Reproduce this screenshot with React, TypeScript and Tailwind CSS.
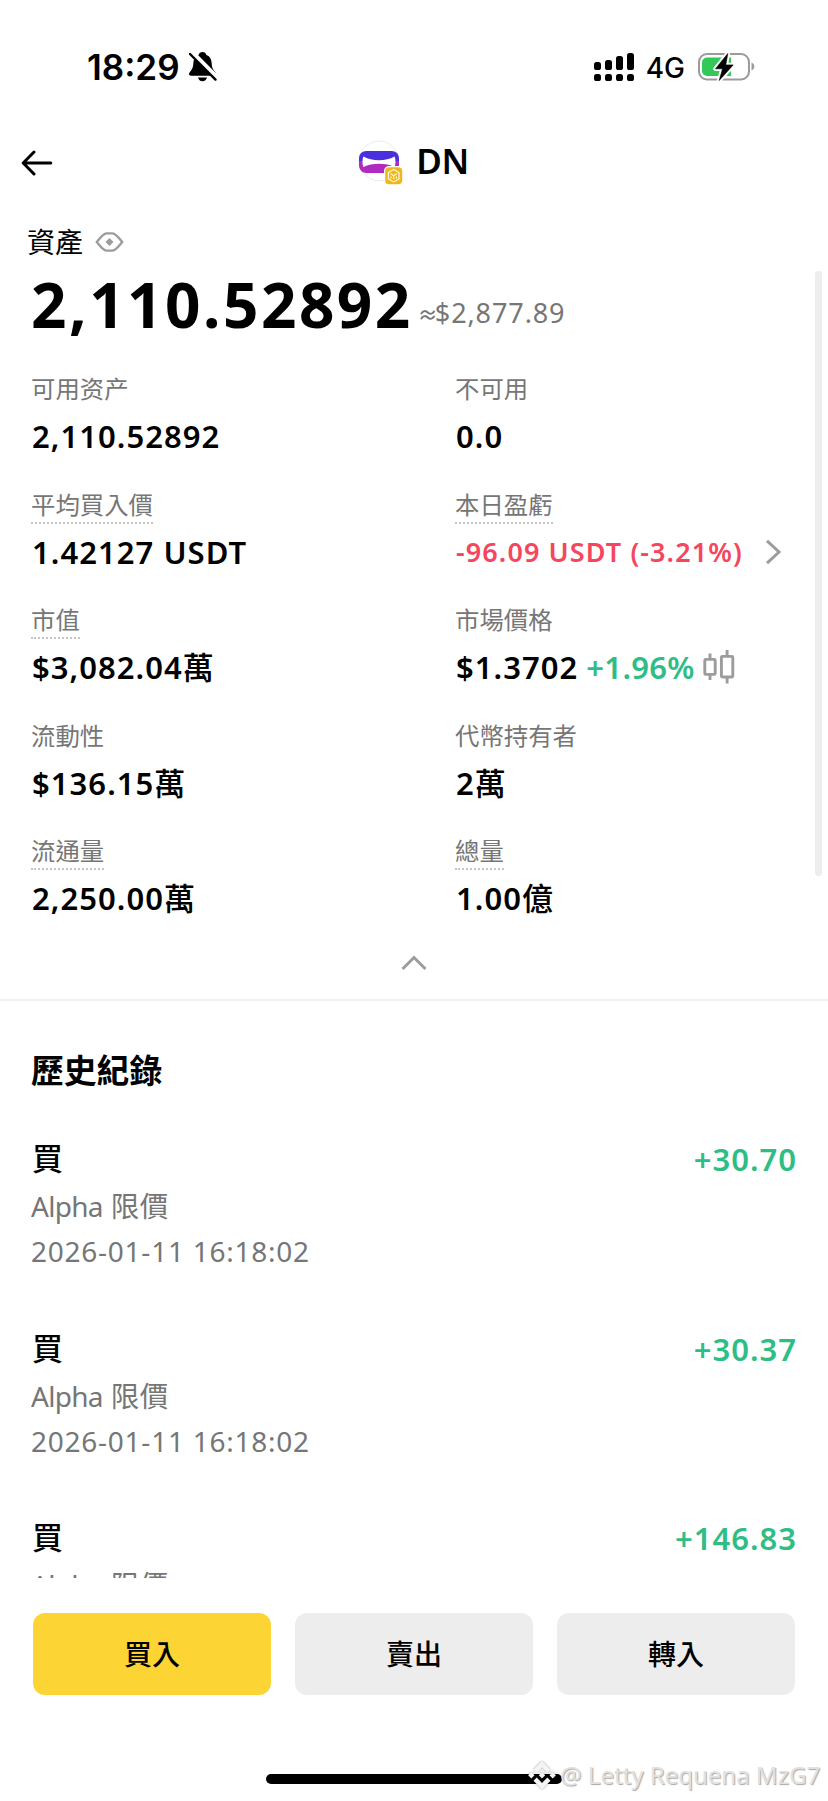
import type { ReactNode } from 'react'

type Stat = { label: string; hint?: boolean; value: ReactNode }

const Unit = ({ children }: { children: string }) => <span className="font-medium tracking-normal">{children}</span>

const stats: Stat[] = [
  { label: '可用资产',   value: '2,110.52892' },
  { label: '不可用',     value: '0.0' },
  { label: '平均買入價', hint: true, value: '1.42127 USDT' },
  { label: '本日盈虧',   hint: true, value: <DailyPnl /> },
  { label: '市值',       hint: true, value: <>$3,082.04<Unit>萬</Unit></> },
  { label: '市場價格',   value: <MarketPrice /> },
  { label: '流動性',     value: <>$136.15<Unit>萬</Unit></> },
  { label: '代幣持有者', value: <>2<Unit>萬</Unit></> },
  { label: '流通量',     hint: true, value: <>2,250.00<Unit>萬</Unit></> },
  { label: '總量',       hint: true, value: <>1.00<Unit>億</Unit></> },
]

const history = [
  { id: 1, amount: '+30.70',  date: '2026-01-11 16:18:02' },
  { id: 2, amount: '+30.37',  date: '2026-01-11 16:18:02' },
  { id: 3, amount: '+146.83', date: '2026-01-11 16:18:02' },
]

const actions = [
  { label: '買入', color: 'bg-[#fcd535]' },
  { label: '賣出', color: 'bg-[#ededed]' },
  { label: '轉入', color: 'bg-[#ededed]' },
]

function DailyPnl() {
  return (
    <span className="flex items-center text-[#f6465d]">
      <span className="text-[27px] tracking-[1.100px]">-96.09 USDT (-3.21%)</span>
      <svg className="ml-[22px]" width="17" height="26" viewBox="0 0 17 26" fill="none" stroke="#9c9c9c" strokeWidth="3">
        <path d="M2 1.8 14 13 2 24.2" />
      </svg>
    </span>
  )
}

function MarketPrice() {
  return (
    <span className="flex items-center">
      $1.3702
      <span className="ml-[8px] tracking-[0.300px] text-[#2ebd85]">+1.96%</span>
      <svg className="ml-[8px]" width="32" height="34" viewBox="0 0 32 34" fill="none" stroke="#9c9c9c" strokeWidth="2.9">
        <rect x="1.8" y="9.4" width="10.4" height="15" rx="1" />
        <path d="M7 3.5v6M7 24.5v5.5" />
        <rect x="18.4" y="6.4" width="11.4" height="20.6" rx="1" />
        <path d="M24.1 0v6M24.1 27v6.5" />
      </svg>
    </span>
  )
}

function StatusBar() {
  return (
    <div className="flex h-[134px] items-center justify-between pl-[87px] pr-[73px] font-[Inter,sans-serif]">
      <div className="flex items-center">
        <span className="text-[35px] font-semibold">18:29</span>
        <svg className="ml-[9px]" width="28" height="30" viewBox="0 0 28 30">
          <path d="M13.5 0c-2 0-3.4 1.2-3.9 2.9C6.4 4 4.600 6.700 4.400 10.500c-.2 4-.8 6.200-2.700 8.500C.6 20.400 0 21.300 0 22.100c0 1 .8 1.700 2 1.700h23c1.200 0 2-.7 2-1.700 0-.8-.6-1.700-1.700-3.100-1.900-2.300-2.500-4.500-2.700-8.500-.2-3.800-2-6.500-5.200-7.600C16.900 1.200 15.500 0 13.500 0ZM9 25.600c.5 2.200 2.300 3.700 4.500 3.700s4-1.500 4.500-3.700Z" />
          <path d="M2.500 0 28 25.800" stroke="#fff" strokeWidth="5" />
          <path d="M1 2 26.500 27.600" stroke="#000" strokeWidth="2.400" strokeLinecap="round" />
        </svg>
      </div>
      <div className="flex items-center">
        <svg width="40" height="28" viewBox="0 0 40 28">
          <rect x="0" y="9" width="7" height="8" rx="2.600" />
          <rect x="11" y="7" width="7" height="10" rx="2.600" />
          <rect x="22" y="3" width="7" height="14" rx="2.600" />
          <rect x="33" y="0" width="7" height="17" rx="2.600" />
          <rect x="0" y="21" width="7" height="7" rx="2.600" />
          <rect x="11" y="21" width="7" height="7" rx="2.600" />
          <rect x="22" y="21" width="7" height="7" rx="2.600" />
          <rect x="33" y="21" width="7" height="7" rx="2.600" />
        </svg>
        <span className="relative top-px ml-[12px] text-[28px] font-medium">4G</span>
        <svg className="ml-[13px]" width="57" height="30" viewBox="0 0 57 30">
          <rect x="1" y="2" width="50" height="25.500" rx="8" fill="none" stroke="#9b9b9b" strokeWidth="2" />
          <path d="M53.500 10.500c1.800.7 2.800 2.200 2.800 4s-1 3.300-2.800 4Z" fill="#9b9b9b" />
          <path d="M9 5.500h24v18.500H9a5 5 0 0 1-5-5v-8.500a5 5 0 0 1 5-5Z" fill="#34c759" />
          <path d="M29.800 1.500 17.500 16.800h7l-3.300 11.700 14-15.600h-7.400Z" stroke="#fff" strokeWidth="4.500" strokeLinejoin="round" />
          <path d="M29.800 1.500 17.500 16.800h7l-3.300 11.700 14-15.600h-7.400Z" stroke="#000" strokeWidth=".6" strokeLinejoin="round" />
        </svg>
      </div>
    </div>
  )
}

function TokenLogo() {
  return (
    <svg className="relative top-px" width="46" height="46" viewBox="0 0 46 46" fill="none">
      <circle cx="21" cy="21" r="19.800" stroke="#ededed" />
      <path d="M1 21v-2.500C1 14 4 11 8.500 11h25c4.500 0 7.500 3 7.500 7.500V21Z" fill="#4a30dc" />
      <path d="M1 21h40v4c0 4.500-3 8-7.500 8h-25C4 33 1 29.500 1 25Z" fill="#b02ac0" />
      <path d="M5.500 16.500c4.500 2.500 9.500 3.800 15.500 3.800s11-1.300 15.500-3.800c1.300 2 1.300 8.500 0 10.500-4.500-2.300-9.500-3.300-15.500-3.300S10 24.700 5.500 27c-1.300-2-1.300-8.500 0-10.500Z" fill="#fff" />
      <rect x="26" y="26" width="19.500" height="19.500" rx="5" fill="#fff" />
      <rect x="27.200" y="27.200" width="17" height="17" rx="4" fill="#ecb91c" />
      <g stroke="#fff8dc" strokeWidth="1.200">
        <path d="m35.700 29.500 5.300 3v6.400l-5.300 3-5.300-3v-6.400Z" />
        <path d="m32.500 33.500 3.200 2.300 3.200-2.300M35.700 35.800v3.500M33 36.500v2M38.400 36.500v2" />
      </g>
    </svg>
  )
}

function NavBar() {
  return (
    <header className="relative flex h-14 items-center justify-center pr-px">
      <svg className="absolute left-[21px] top-[16px]" width="32" height="26" viewBox="0 0 32 26" fill="none" stroke="#000" strokeWidth="3" strokeLinecap="round" strokeLinejoin="round">
        <path d="M13 2 2.200 13 13 24M2.500 13h27.300" />
      </svg>
      <TokenLogo />
      <h1 className="mb-[3px] ml-[12px] text-[35px] font-semibold leading-none tracking-[-0.5px]">DN</h1>
    </header>
  )
}

function StatCell({ label, hint, value }: Stat) {
  return (
    <div className="h-[115.5px]">
      <div className="h-10 text-[24.4px] leading-[38px] text-[#767676]">
        <span className={hint ? 'block h-[38px] w-fit border-b-2 border-dotted border-[#c4c4c4]' : 'block'}>{label}</span>
      </div>
      <div className="pl-px text-[31px] font-semibold leading-[52px] tracking-[1.050px] whitespace-nowrap">{value}</div>
    </div>
  )
}

function Watermark() {
  return (
    <div className="absolute left-[528px] top-[1758px] flex items-center">
      <svg className="drop-shadow-[0_0_1px_rgba(0,0,0,0.4)]" width="28" height="34" viewBox="0 0 28 34" fill="#f4f4f4">
        <path d="m14 3 8.500 8.700-3.200 3.200L14 9.500l-5.300 5.400-3.200-3.200Z" />
        <path d="m14 31.500-8.500-8.700 3.200-3.200L14 25l5.300-5.400 3.200 3.200Z" />
        <path d="m14 14 3.200 3.200L14 20.400l-3.200-3.200ZM3.300 14l3.200 3.200-3.200 3.200L.1 17.200ZM24.700 14l3.200 3.200-3.200 3.200-3.200-3.200Z" />
      </svg>
      <span className="ml-[4px] text-[24px] leading-[34px] whitespace-nowrap text-[#e2e2e2] [text-shadow:1px_1px_1px_rgba(0,0,0,0.35)]">@ Letty Requena MzG7</span>
    </div>
  )
}

export default function App() {
  return (
    <main className="relative h-[1801px] w-[828px] overflow-hidden bg-white font-['Noto_Sans','Noto_Sans_CJK_TC',sans-serif] text-black">
      <StatusBar />
      <NavBar />

      {/* ASSETS */}
      <section>
        <div className="mt-8 flex h-10 items-center pl-[27px]">
          <h2 className="text-[28px] leading-10">資產</h2>
          <svg className="ml-[12px]" width="29" height="20" viewBox="0 0 29 20" fill="none" stroke="#9c9c9c" strokeWidth="2.400">
            <path d="M1.800 10C5.500 5.500 8 1.800 11.500 1.400h6C21 1.800 23.500 5.500 27.200 10c-3.700 4.500-6.200 8.200-9.700 8.600h-6C8 18.200 5.500 14.500 1.800 10Z" />
            <path d="m14.500 6 4 4-4 4-4-4Z" fill="#9c9c9c" stroke="none" />
          </svg>
        </div>
        <div className="flex h-[84px] items-center pl-[31px] leading-[84px]">
          <span className="text-[62px] font-bold tracking-[2.500px]">2,110.52892</span>
          <span className="ml-[5px] mt-[20px] text-[27px] tracking-[0.900px] text-[#767676]">
            <span className="text-[20px] font-medium tracking-[-3px]">≈</span>$2,877.89
          </span>
        </div>
        <div className="mt-[24px] grid grid-cols-[424px_1fr] pl-[31px]">
          {stats.map((s) => (
            <StatCell key={s.label} {...s} />
          ))}
        </div>
        <div className="flex h-[53.500px] justify-center border-b-2 border-[#f2f2f2] pt-[6px]">
          <svg width="26" height="17" viewBox="0 0 26 17" fill="none" stroke="#9c9c9c" strokeWidth="3">
            <path d="M1.500 15 13 3.500 24.500 15" />
          </svg>
        </div>
      </section>

      {/* HISTORY */}
      <section className="px-[31px]">
        <h2 className="mt-[42px] text-[32.800px] font-bold leading-[56px]">歷史紀錄</h2>
        <div className="mt-[37px] h-[442px] overflow-hidden">
          {history.map((h) => (
            <div key={h.id} className="h-[189.500px] text-[28px] text-[#767676]">
              <div className="flex justify-between text-[31px] leading-[46px]">
                <span className="relative -top-px left-px font-medium text-black">買</span>
                <span className="font-semibold tracking-[1px] text-[#2ebd85]">{h.amount}</span>
              </div>
              <div className="pt-px leading-[46px] tracking-[0.500px]"><span className="tracking-[-0.700px]">Alpha</span> <span className="text-[28.500px]">限價</span></div>
              <div className="leading-[45px] tracking-[0.750px]">{h.date}</div>
            </div>
          ))}
        </div>
      </section>

      <div className="mt-[35px] flex gap-6 px-[33px]">
        {actions.map((a) => (
          <button key={a.label} className={`h-[82px] flex-1 rounded-[12px] text-[28px] font-medium ${a.color}`}>{a.label}</button>
        ))}
      </div>

      {/* Home indicator */}
      <div className="mx-auto mt-[79px] h-[10px] w-[296px] rounded-full bg-black" />

      {/* Scroll thumb */}
      <div className="absolute right-[6px] top-[271px] h-[605px] w-[7px] rounded-full bg-[#ededed]" />
      <Watermark />
    </main>
  )
}
